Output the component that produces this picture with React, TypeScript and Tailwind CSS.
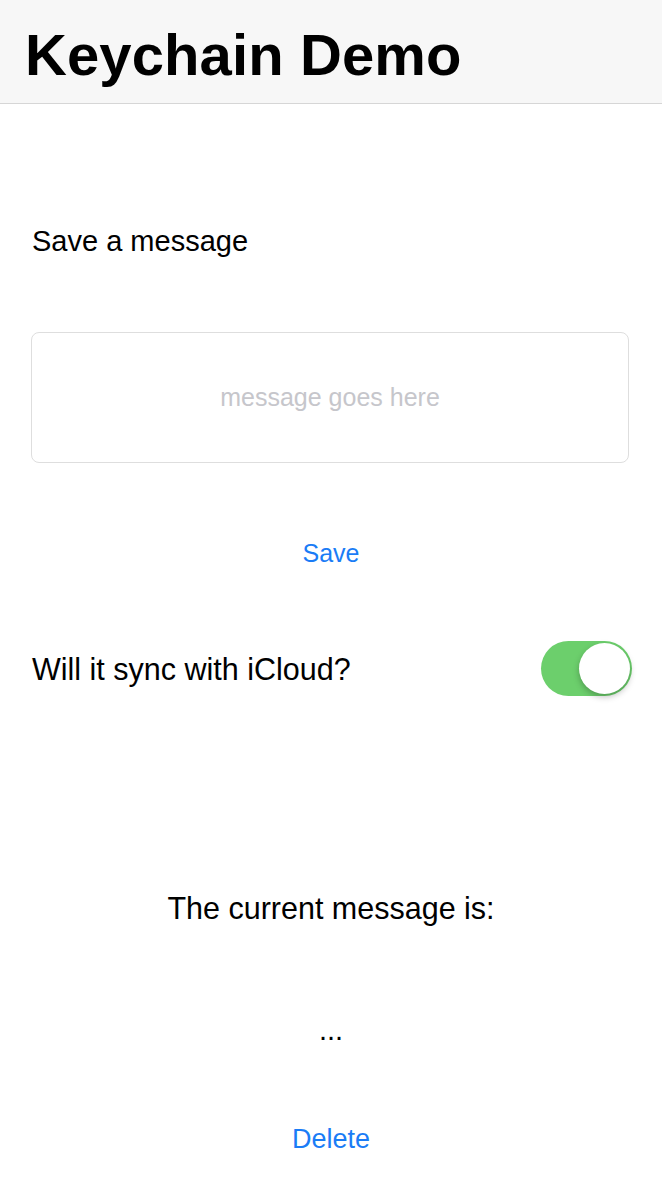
import { useState } from "react";

export default function App() {
  const [message, setMessage] = useState("");
  const [sync, setSync] = useState(true);

  return (
    <div className="w-[662px] h-[1180px] bg-white font-['Liberation_Sans',Arial,sans-serif] text-black overflow-hidden">
      <header className="h-[104px] bg-[#f7f7f7] border-b border-[#d6d6d6] px-[25px] flex items-start">
        <h1 className="mt-[20px] text-[58px] leading-[70px] font-bold tracking-[0.1px]">
          Keychain Demo
        </h1>
      </header>

      <main className="px-[31px] flex flex-col">
        <p className="mt-[120px] text-[29px] leading-[34px] pl-[1px]">Save a message</p>

        <input
          type="text"
          value={message}
          onChange={(e) => setMessage(e.target.value)}
          placeholder="message goes here"
          className="mt-[74px] h-[131px] w-[598px] rounded-[8px] border border-[#dedede] text-center text-[25px] placeholder:text-[#c6c6cb] focus:outline-none"
        />

        <button className="mt-[75px] self-center text-[25px] leading-[30px] text-[#1a7cf6]">
          Save
        </button>

        <div className="mt-[73px] flex items-center justify-between">
          <span className="text-[30.5px] leading-[34px] pl-[1px]">Will it sync with iCloud?</span>
          <button
            onClick={() => setSync(!sync)}
            className={`mr-[-1px] w-[91px] h-[55px] rounded-full p-[2px] flex ${
              sync ? "bg-[#6ccf6c] justify-end" : "bg-[#e5e5e5] justify-start"
            }`}
          >
            <span className="block w-[51px] h-[51px] rounded-full bg-white shadow-[0_3px_6px_rgba(0,0,0,0.25)]" />
          </button>
        </div>

        <p className="mt-[195px] self-center text-[30.5px] leading-[34px]">The current message is:</p>

        <p className="mt-[88px] self-center text-[29px] leading-[34px]">...</p>

        <button className="mt-[77px] self-center text-[27px] leading-[30px] text-[#1a7cf6]">
          Delete
        </button>
      </main>
    </div>
  );
}
